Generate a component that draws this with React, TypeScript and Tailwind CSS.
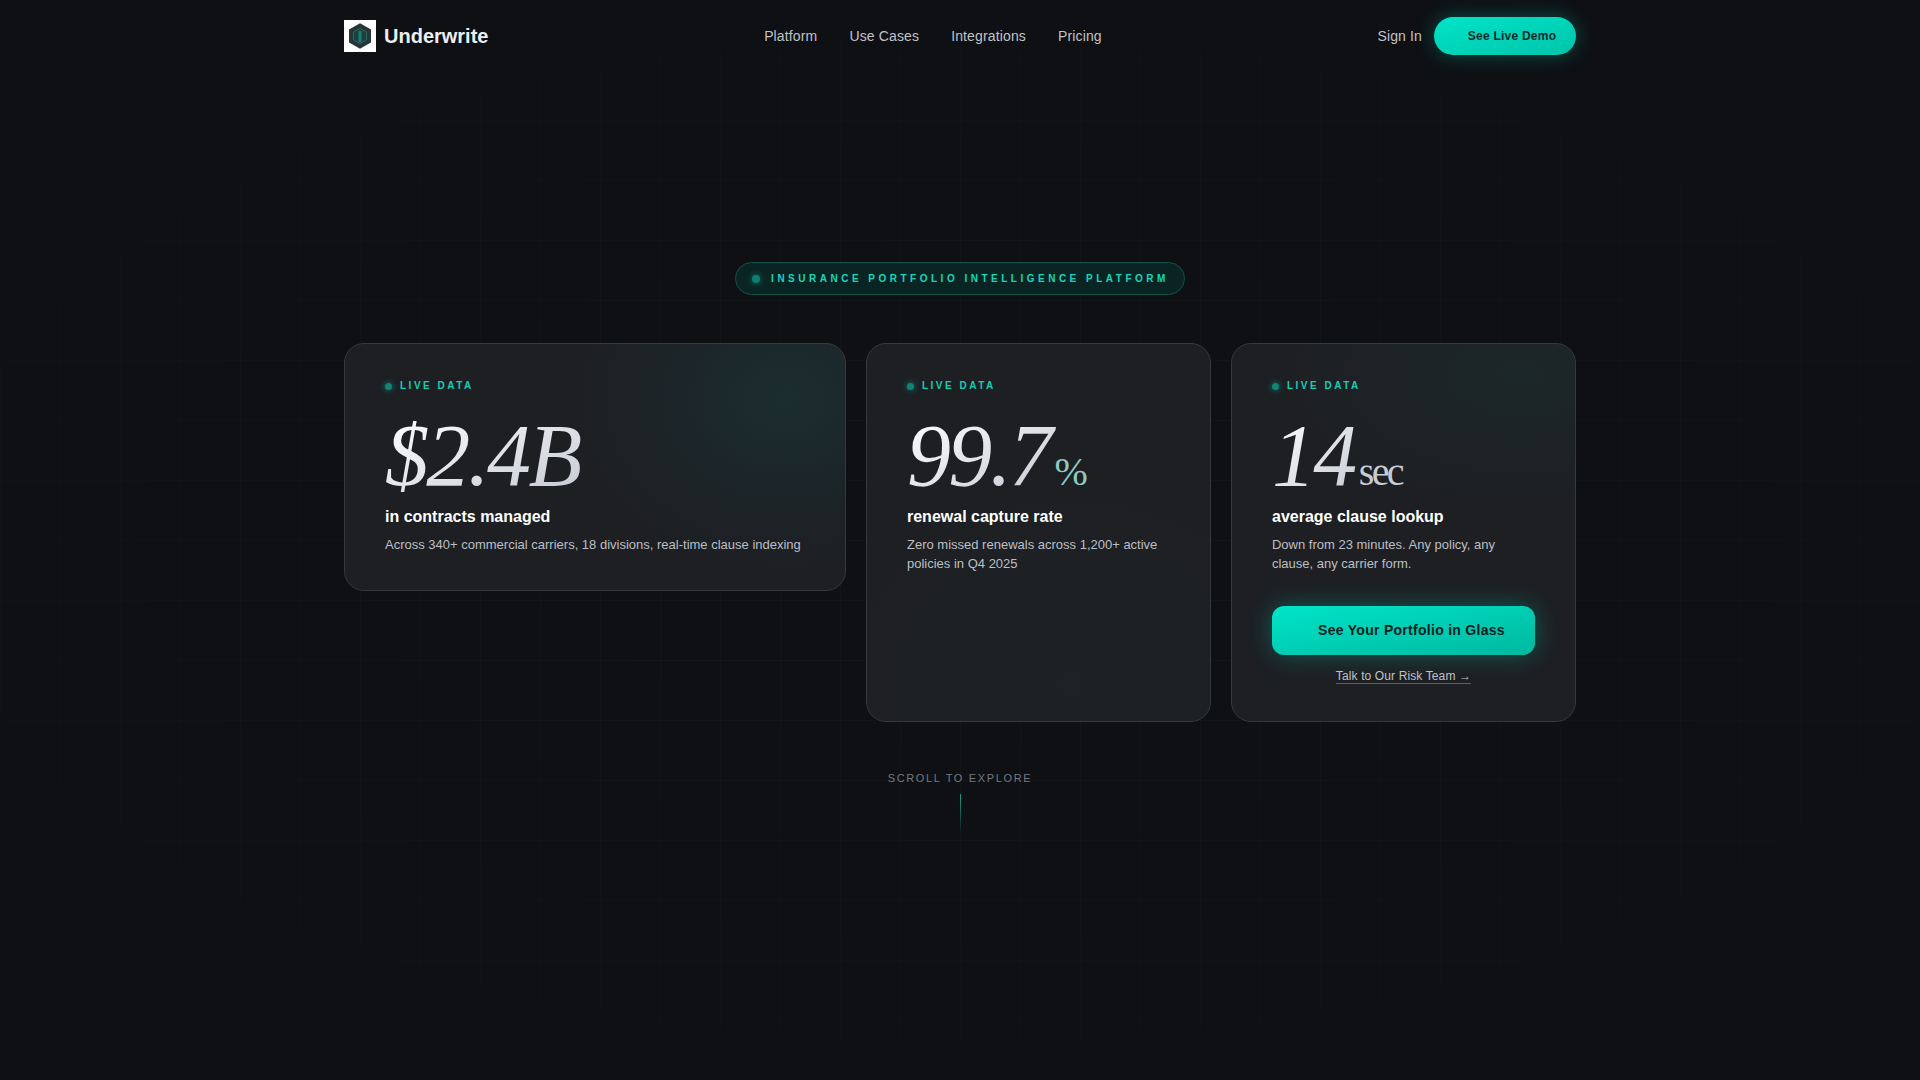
const stats = [
  { num: "$2.4B", unit: "", label: "in contracts managed", desc: <>Across 340+ commercial carriers, 18 divisions, real-time clause indexing</>, wrap: "self-start h-[248px]", glow: "bg-[radial-gradient(ellipse_42%_70%_at_88%_22%,rgba(0,210,200,0.08),transparent_100%)]" },
  { num: "99.7", unit: "%", label: "renewal capture rate", desc: <>Zero missed renewals across 1,200+ active policies in Q4 2025</>, wrap: "", glow: "bg-[radial-gradient(ellipse_80%_60%_at_60%_90%,rgba(0,229,200,0.012),transparent_100%)]" },
  { num: "14", unit: "sec", label: "average clause lookup", desc: <>Down from 23 minutes. Any policy, any clause, any carrier form.</>, wrap: "", glow: "bg-[radial-gradient(ellipse_70%_35%_at_85%_8%,rgba(0,229,200,0.045),transparent_100%)]" },
];

function Logo() {
  return (
    <div className="w-8 h-8 bg-white flex items-center justify-center">
      <svg width="26" height="26" viewBox="0 0 26 26">
        <path d="M13 1.5 23 7v12l-10 5.5L3 19V7z" fill="#1a3a3a" stroke="#2a3638" strokeWidth="2" />
        <path d="M13 5.5 19.5 9v8L13 20.5 6.5 17V9z" fill="#1c3f3e" stroke="#4a6666" strokeWidth="0.8" />
        <rect x="11.5" y="8" width="3" height="11" fill="#0f7f6e" />
      </svg>
    </div>
  );
}

function StatCard({ s }: { s: (typeof stats)[number] }) {
  return (
    <div className={`relative rounded-[20px] border border-[#35393c] bg-[#1d1f23] px-10 pt-[36px] overflow-hidden ${s.wrap}`}>
      <div className={`absolute inset-0 ${s.glow}`} />
      <div className="relative">
        <div className="flex items-center gap-2 h-[12px]">
          <span className="w-[7px] h-[7px] rounded-full bg-[#0f8575] shadow-[0_0_6px_#0f8575]" />
          <span className="text-[10px] font-bold tracking-[0.25em] text-[#16cfb4] font-['Liberation_Sans',sans-serif] leading-none">LIVE DATA</span>
        </div>
        <div className="mt-[20px] h-[88px] flex items-baseline font-['Liberation_Serif',serif] text-[88px] leading-none tracking-[-0.03em]">
          <span className="italic text-transparent bg-clip-text bg-gradient-to-br from-white to-[#c4c8d2] pr-[6px]">{s.num}</span>
          {s.unit && (
            <span className={`text-[40px] leading-none -ml-[2px] tracking-[-2.64px] ${s.unit === "%" ? "text-[#8fc9c6]" : "text-[#c8ccd4]"}`}>{s.unit}</span>
          )}
        </div>
        <div className="mt-[5px] text-white font-bold text-[16px] leading-[24px] font-['Liberation_Sans',sans-serif]">{s.label}</div>
        <p className="mt-[6px] text-[13px] leading-[19px] text-[#bcbfc4] font-['Liberation_Sans',sans-serif]">{s.desc}</p>
        {s.unit === "sec" && (
          <div className="mt-[33px] flex flex-col items-center">
            <button className="w-full h-[49px] rounded-[12px] pl-[16px] bg-gradient-to-br from-[#00e5c8] to-[#00b8a0] text-[#0a1f1f] font-bold text-[14px] tracking-[0.02em] font-['Liberation_Sans',sans-serif] shadow-[0_0_24px_rgba(0,229,200,0.3)]">
              See Your Portfolio in Glass
            </button>
            <a className="mt-[14px] text-[12px] leading-[14px] tracking-[0.01em] text-[#c0c3c8] border-b border-[#5a5e63] font-['Liberation_Sans',sans-serif]">Talk to Our Risk Team →</a>
          </div>
        )}
      </div>
    </div>
  );
}

export default function App() {
  return (
    <div className="relative min-h-[1080px] bg-[#0e1014] overflow-hidden font-['Liberation_Sans',sans-serif]">
      <div className="absolute inset-0 bg-[linear-gradient(rgba(255,255,255,0.025)_1px,transparent_1px),linear-gradient(90deg,rgba(255,255,255,0.025)_1px,transparent_1px)] bg-[size:60px_60px] [mask-image:radial-gradient(ellipse_80%_70%_at_50%_50%,black_20%,transparent_100%)]" />
      <div className="relative max-w-[1280px] mx-auto px-6">
        <header className="flex items-center justify-between h-[72px] pb-[1px]">
          <div className="flex items-center gap-2">
            <Logo />
            <span className="text-[20px] font-bold text-[#eceef2]">Underwrite</span>
          </div>
          <nav className="flex items-center gap-8 pt-[2px] text-[14px] tracking-[0.01em] text-[#c0c3c8]">
            <a>Platform</a><a>Use Cases</a><a>Integrations</a><a>Pricing</a>
          </nav>
          <div className="flex items-center gap-3">
            <a className="pt-[2px] text-[14px] tracking-[0.01em] text-[#c0c3c8]">Sign In</a>
            <button className="h-[38px] w-[142px] rounded-full pl-[14px] bg-gradient-to-br from-[#00e5c8] to-[#00c4ab] text-[#0a2a2a] font-bold text-[12px] tracking-[0.02em] shadow-[0_0_20px_rgba(0,229,200,0.3)]">See Live Demo</button>
          </div>
        </header>
        <div className="flex justify-center mt-[190px]">
          <div className="flex items-center gap-[11px] h-[33px] pl-4 pr-[15px] rounded-full border border-[#11524a] bg-[#0a2423]">
            <span className="w-2 h-2 rounded-full bg-[#0d7d70] shadow-[0_0_6px_#0d7d70]" />
            <span className="text-[10px] font-bold tracking-[0.35em] text-[#1ad6bb]">INSURANCE PORTFOLIO INTELLIGENCE PLATFORM</span>
          </div>
        </div>
        <div className="mt-[48px] grid grid-cols-[1.455fr_1fr_1fr] gap-5 h-[379px]">
          {stats.map((s) => <StatCard key={s.label} s={s} />)}
        </div>
        <div className="mt-[49px] flex flex-col items-center">
          <span className="text-[11px] leading-[14px] tracking-[0.15em] text-[#75797e]">SCROLL TO EXPLORE</span>
          <span className="mt-[9px] w-px h-10 bg-gradient-to-b from-[#14a08c] to-transparent" />
        </div>
      </div>
    </div>
  );
}
